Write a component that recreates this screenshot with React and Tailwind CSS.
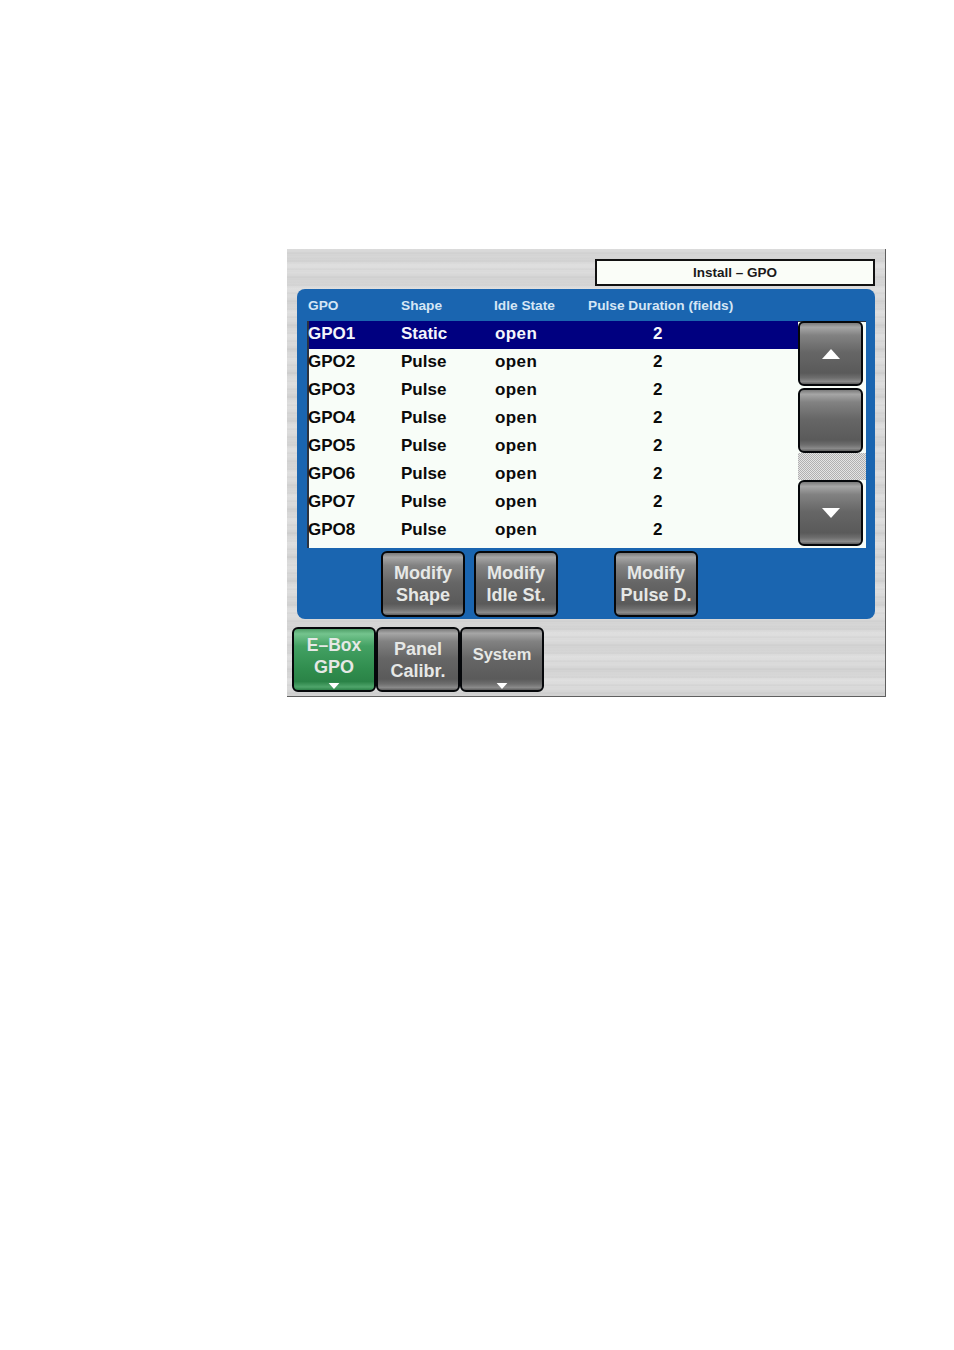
const ROWS = [
  ['GPO1', 'Static', 'open', '2'],
  ['GPO2', 'Pulse', 'open', '2'],
  ['GPO3', 'Pulse', 'open', '2'],
  ['GPO4', 'Pulse', 'open', '2'],
  ['GPO5', 'Pulse', 'open', '2'],
  ['GPO6', 'Pulse', 'open', '2'],
  ['GPO7', 'Pulse', 'open', '2'],
  ['GPO8', 'Pulse', 'open', '2'],
];

const GREY = 'bg-[linear-gradient(180deg,#7a7a7a_0%,#a6a6a6_7%,#828282_20%,#666666_48%,#5a5a5a_82%,#6e6e6e_90%,#8a8a8a_96%,#5e5e5e_100%)]';
const GREEN = 'bg-[linear-gradient(180deg,#4f9f68_0%,#74c48e_8%,#43a163_28%,#2f8c4d_68%,#2a8347_86%,#4fa56b_95%,#2c8249_100%)]';

function Arrow({ up, large }) {
  return (
    <svg width={large ? 18 : 12} height={large ? 10 : 6} viewBox="0 0 18 10" className="block">
      <path d={up ? 'M9 0L18 10H0Z' : 'M0 0H18L9 10Z'} fill="#ffffff" />
    </svg>
  );
}

function Btn({ green, className, children }) {
  return (
    <div className={`relative flex flex-col items-center justify-center rounded-[6px] border-2 border-[#05070a] text-[#e6e8e6] font-bold text-[18px] leading-[22px] text-center ${green ? GREEN : GREY} ${className}`}>
      {children}
    </div>
  );
}

export default function App() {
  return (
    <div className="min-h-[1350px] bg-white pt-[249px] pl-[287px] font-['Liberation_Sans',Arial,sans-serif]">
      <div className="w-[599px] h-[448px] border-r border-b border-[#5f5f5f] bg-[#dadada] bg-[image:repeating-linear-gradient(180deg,rgba(255,255,255,0.3)_0px,rgba(255,255,255,0)_1px,rgba(255,255,255,0)_7px,rgba(255,255,255,0.3)_8px),repeating-linear-gradient(180deg,rgba(0,0,0,0.05)_0px,rgba(0,0,0,0)_1px,rgba(0,0,0,0)_3px,rgba(0,0,0,0.04)_4px),repeating-linear-gradient(180deg,rgba(0,0,0,0)_0px,rgba(0,0,0,0.04)_9px,rgba(255,255,255,0.12)_17px,rgba(0,0,0,0)_23px)]">
        {/* Title */}
        <div className="flex justify-end pt-[10px] pr-[10px]">
          <div className="w-[280px] h-[27px] border-2 border-[#111] bg-[#fafdf8] flex items-center justify-center pt-px text-[13.5px] font-bold text-[#1a1a1a]">
            Install – GPO
          </div>
        </div>

        {/* Blue panel */}
        <div className="ml-[10px] mt-[3px] w-[578px] h-[330px] rounded-[8px] bg-[#1a65b0]">
          <div className="h-[32px] grid grid-cols-[93px_93px_94px_1fr] pl-[11px] items-center text-[13.7px] font-bold text-[#d5e6f5] pt-[2px]">
            <span>GPO</span>
            <span>Shape</span>
            <span>Idle State</span>
            <span>Pulse Duration (fields)</span>
          </div>

          <div className="ml-[10px] w-[559px] h-[227px] flex bg-[#f8fdf8] border-l-2 border-t border-[#2c3340]">
            <div className="w-[489px] -mt-px">
              {ROWS.map((row, i) => (
                <div
                  key={row[0]}
                  className={`h-[28px] grid grid-cols-[93px_93px_94px_1fr] items-center pb-[2px] text-[17px] font-bold ${i === 0 ? 'bg-[#000080] text-[#f4f6fb]' : 'text-[#0a0a0a]'}`}
                >
                  <span className="-ml-px">{row[0]}</span>
                  <span className="-ml-px">{row[1]}</span>
                  <span className="tracking-[0.4px]">{row[2]}</span>
                  <span className="pl-[64px]">{row[3]}</span>
                </div>
              ))}
            </div>
            <div className="w-[68px] -mt-px flex flex-col">
              <Btn className="w-[65px] h-[65px] shrink-0">
                <Arrow up large />
              </Btn>
              <Btn className="w-[65px] h-[65px] shrink-0 mt-[2px]" />
              <div className="w-[68px] h-[27px] bg-[repeating-conic-gradient(#b0b0b0_0_25%,#e4e4e4_0_50%)] bg-[length:2px_2px]" />
              <Btn className="w-[65px] h-[66px] shrink-0">
                <Arrow large />
              </Btn>
            </div>
          </div>

          <div className="flex mt-[3px] ml-[84px]">
            <Btn className="w-[84px] h-[66px]">
              <span>Modify</span>
              <span>Shape</span>
            </Btn>
            <Btn className="w-[84px] h-[66px] ml-[9px]">
              <span>Modify</span>
              <span>Idle St.</span>
            </Btn>
            <Btn className="w-[84px] h-[66px] ml-[56px]">
              <span>Modify</span>
              <span>Pulse D.</span>
            </Btn>
          </div>
        </div>

        {/* Bottom tabs */}
        <div className="flex ml-[5px] mt-[8px]">
          <Btn green className="w-[84px] h-[65px] pb-[7px]">
            <span className="text-[17.5px]">E–Box</span>
            <span>GPO</span>
            <div className="absolute bottom-[1px] left-1/2 -translate-x-1/2">
              <Arrow />
            </div>
          </Btn>
          <Btn className="w-[84px] h-[65px]">
            <span>Panel</span>
            <span>Calibr.</span>
          </Btn>
          <Btn className="w-[84px] h-[65px] pb-[12px]">
            <span className="text-[16.5px]">System</span>
            <div className="absolute bottom-[1px] left-1/2 -translate-x-1/2">
              <Arrow />
            </div>
          </Btn>
        </div>
      </div>
    </div>
  );
}
